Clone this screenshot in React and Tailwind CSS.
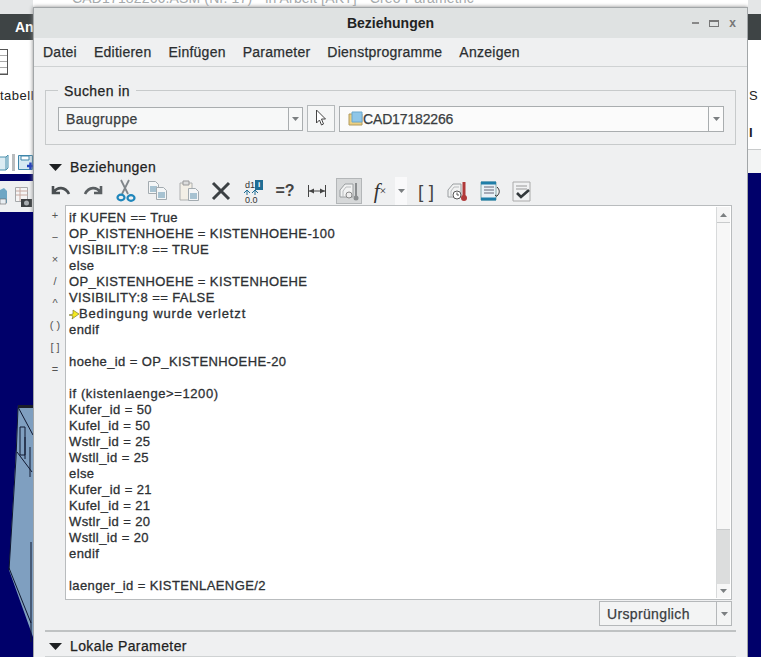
import React from 'react';

const lines = [
  'if KUFEN == True',
  'OP_KISTENHOEHE = KISTENHOEHE-100',
  'VISIBILITY:8 == TRUE',
  'else',
  'OP_KISTENHOEHE = KISTENHOEHE',
  'VISIBILITY:8 == FALSE',
  '#Bedingung wurde verletzt',
  'endif',
  '',
  'hoehe_id = OP_KISTENHOEHE-20',
  '',
  '~if (kistenlaenge>=1200)',
  'Kufer_id = 50',
  'Kufel_id = 50',
  'Wstlr_id = 25',
  'Wstll_id = 25',
  'else',
  'Kufer_id = 21',
  'Kufel_id = 21',
  'Wstlr_id = 20',
  'Wstll_id = 20',
  'endif',
  '',
  'laenger_id = KISTENLAENGE/2',
];

const Caret = ({ className = '' }) => (
  <svg width="7" height="4" viewBox="0 0 7 4" className={className}>
    <path d="M0 0h7L3.5 4z" fill="#7b7f81" />
  </svg>
);

const Section = () => (
  <svg width="13" height="7" viewBox="0 0 13 7" className="shrink-0">
    <path d="M0 0h13L6.5 7z" fill="#1d2022" />
  </svg>
);

const Tool = ({ children, className = '' }) => (
  <div className={`flex h-[26px] w-[26px] shrink-0 items-center justify-center ${className}`}>
    <svg width="24" height="24" viewBox="0 0 24 24" fill="none">{children}</svg>
  </div>
);

const Doc = ({ x = 0, y = 0 }) => (
  <g transform={`translate(${x} ${y})`}>
    <path d="M.5.5h7l3 3v9H.5z" fill="#f4f6f7" stroke="#a3abb0" />
    <path d="M2 6h7M2 8h7M2 10h7" stroke="#5b8fac" />
  </g>
);

const Tag = ({ x = 0 }) => (
  <g transform={`translate(${x} 0)`}>
    <path d="M3 18v-7l5-6h8v13z" fill="#f1f2f2" stroke="#9a9ea0" />
    <path d="M6 18v-6l3-4h5" stroke="#b9bcbe" />
  </g>
);

export default function App() {
  return (
    <div className="relative flex h-[657px] w-[761px] overflow-hidden bg-white text-[14px] leading-none text-[#2d3033] [font-family:'Liberation_Sans',Arial,sans-serif]">
      {/* title of the main window, mostly hidden behind the top edge */}
      <div className="absolute left-[72px] top-[-9px] whitespace-nowrap text-[14px] tracking-[0.15px] text-[#a6aaac]">
        CAD17182266.ASM (Nr. 17) · in Arbeit [AKT] · Creo Parametric
      </div>

      {/* app behind, left side */}
      <div className="flex w-[33px] shrink-0 flex-col">
        <div className="h-[14px] bg-[#e4e6e7]" />
        <div className="flex h-[26px] items-center overflow-hidden bg-[#3e4445] pl-[15px] text-[14px] font-bold text-white">
          <span className="whitespace-nowrap">An</span>
        </div>
        <div className="flex h-[134px] flex-col overflow-hidden bg-white">
          <div className="mt-[9px] h-[26px] w-[8px] border border-l-0 border-[#555] bg-[repeating-linear-gradient(180deg,#fff,#fff_5px,#aaa_5px,#aaa_6px)]" />
          <div className="mt-[14px] whitespace-nowrap text-[13px] tracking-[0.5px] text-[#222]">tabell</div>
          <div className="mt-auto mb-[3px] flex h-[17px] items-center gap-[3px]">
            <svg width="9" height="17" viewBox="0 0 9 17" className="shrink-0">
              <path d="M0 3h6v13H0M6 3l2-2v13l-2 2" fill="#dcecf3" stroke="#4b90ad" />
            </svg>
            <div className="h-[17px] w-[3px] shrink-0 bg-[#b9bcbe]" />
            <svg width="16" height="17" viewBox="0 0 16 17" className="shrink-0">
              <path d="M.5 1.5h14v14H.5z" fill="#d5e8f2" stroke="#3f86aa" />
              <path d="M3 2h8v4H3z" fill="#fff" stroke="#3f86aa" />
              <path d="M9 12h7M12.500 8.500v7" stroke="#1f3fc0" strokeWidth="2.500" />
            </svg>
          </div>
        </div>
        <div className="h-[7px] bg-[#00006a]" />
        <div className="flex h-[31px] items-center gap-[5px] bg-[#eef0f1]">
          <svg width="10" height="22" viewBox="0 0 10 22" className="shrink-0">
            <path d="M0 4l4-2 3 3v12H0z" fill="#6ea6c4" />
            <path d="M0 13h6v5H0z" fill="#e8eef2" stroke="#666" strokeWidth="0.6" />
          </svg>
          <svg width="18" height="22" viewBox="0 0 18 22" className="shrink-0">
            <path d="M.5 1.500h12v14H.5z" fill="#f5f5f5" stroke="#a5a8aa" />
            <path d="M1 5h12M1 9h12M5 1v14" stroke="#c7a9a0" />
            <path d="M6 13h11v8H6z" fill="#3c4042" />
            <circle cx="11.500" cy="17" r="2.500" fill="#a8adb0" />
          </svg>
        </div>
        <div className="relative min-h-0 flex-1 overflow-hidden bg-[#00006a]">
          <svg width="33" height="445" viewBox="0 0 33 445" className="absolute left-0 top-0">
            <path d="M18 193h15v232L9 358l7-120z" fill="#7f9fc0" />
            <path d="M18 193h15v3H18z" fill="#1a1e2a" />
            <path d="M18 195l15 28M20 215h5v28h-5zM25 225v22M17 240l15 20M30 235v30M18 196l-2 50-7 112M9 356l22 55M31 330v100" stroke="#101830" fill="none" />
          </svg>
        </div>
      </div>

      {/* dialog */}
      <div className="mt-[7px] flex w-[715px] shrink-0 flex-col overflow-hidden border-x border-t border-[#a2a6a8] bg-[#eff0f1] shadow-[0_0_4px_#888]">
        <div className="relative flex h-[30px] shrink-0 items-center justify-center bg-[#dfe2e2] text-[14px] font-bold text-[#222]">
          Beziehungen
          <div className="absolute right-[11px] top-[11px] flex items-center gap-[10px]">
            <div className="h-[2px] w-[7px] bg-[#888]" />
            <div className="h-[7px] w-[10px] border border-t-2 border-[#777]" />
            <span className="text-[12px] font-bold leading-[8px] text-[#777]">x</span>
          </div>
        </div>
        <div className="flex h-[29px] shrink-0 items-center gap-[17px] border-b border-[#cfd2d3] pl-[9px] text-[14px] tracking-[0.25px] text-[#2b2e30] [-webkit-text-stroke:0.25px]">
          <span>Datei</span>
          <span>Editieren</span>
          <span>Einfügen</span>
          <span>Parameter</span>
          <span>Dienstprogramme</span>
          <span>Anzeigen</span>
        </div>

        {/* Suchen in */}
        <div className="relative mx-[11px] mt-[23px] flex h-[55px] shrink-0 items-center gap-[4px] border border-[#c7cacb] pl-[12px] pr-[11px]">
          <span className="absolute -top-[7px] left-[12px] bg-[#eff0f1] px-[6px] text-[14px] tracking-[0.4px] text-[#222] [-webkit-text-stroke:0.25px]">Suchen in</span>
          <div className="mt-[2px] flex h-[24px] w-[245px] items-stretch border border-[#a9adaf] bg-[#f7f8f8]">
            <span className="flex flex-1 items-center pl-[7px] tracking-[0.35px] text-[#3a3d40] [-webkit-text-stroke:0.25px]">Baugruppe</span>
            <span className="flex w-[14px] items-center justify-center border-l border-[#a9adaf]"><Caret /></span>
          </div>
          <div className="mt-[1px] flex h-[27px] w-[28px] items-center justify-center border border-[#b5b9bb] bg-[#f5f6f6]">
            <svg width="12" height="18" viewBox="0 0 12 18"><path d="M1.500 1v13l3-3 2 5 2-1-2-5h4z" fill="#fff" stroke="#444" /></svg>
          </div>
          <div className="mt-[2px] flex h-[26px] flex-1 items-stretch border border-[#a9adaf] bg-[#fbfbfb]">
            <span className="flex flex-1 items-center pl-[8px] tracking-[-0.15px] text-[#3a3d40] [-webkit-text-stroke:0.25px]">
              <svg width="15" height="15" viewBox="0 0 15 15" className="shrink-0"><path d="M1 3h13v11H1z" fill="#eccf80" stroke="#b29b5e" /><path d="M4 1h10v10H4z" fill="#8fc6e8" stroke="#6aa7cc" /></svg>
              CAD17182266
            </span>
            <span className="flex w-[15px] items-center justify-center border-l border-[#a9adaf]"><Caret /></span>
          </div>
        </div>

        {/* Beziehungen */}
        <div className="mx-[15px] mt-[13px] flex h-[18px] shrink-0 items-center gap-[8px] text-[14px] tracking-[0.4px] text-[#222] [-webkit-text-stroke:0.25px]">
          <Section />
          Beziehungen
        </div>
        <div className="ml-[14px] mt-[1px] flex h-[28px] shrink-0 items-center gap-[6px]">
          <Tool><path d="M4 7v7h7M5 13c3-5 11-6 15 2" stroke="#4a4f52" strokeWidth="2.600" /></Tool>
          <Tool><path d="M20 7v7h-7M19 13c-3-5-11-6-15 2" stroke="#5a5f62" strokeWidth="2.600" /></Tool>
          <Tool><path d="M8 1l7 14M16 1L9 15" stroke="#80868a" strokeWidth="1.800" /><ellipse cx="8" cy="18.500" rx="3.500" ry="2.800" stroke="#1f86bb" strokeWidth="2.200" /><ellipse cx="18" cy="19" rx="3.500" ry="2.800" stroke="#1f86bb" strokeWidth="2.200" /></Tool>
          <Tool><Doc x="3" y="2" /><Doc x="11" y="8" /></Tool>
          <Tool><path d="M3 4h12v17H3z" fill="#f3efe6" stroke="#aeb0b0" /><path d="M6 2h6v4H6z" fill="#ddd" stroke="#999" /><Doc x="11" y="9" /></Tool>
          <Tool><path d="M4 4l16 16M20 4L4 20" stroke="#3c4144" strokeWidth="3" /></Tool>
          <div className="relative h-[26px] w-[26px] shrink-0 text-[9px] leading-[8px] text-[#333]">
            <span className="absolute left-[5px] top-[3px]">d1</span>
            <span className="absolute right-[3px] top-[2px] flex h-[10px] w-[8px] items-center justify-center bg-[#1f6d94] text-[8px] font-bold text-white">i</span>
            <svg width="14" height="5" viewBox="0 0 14 5" className="absolute left-[4px] top-[12px]">
              <path d="M3 0v5M0 3l3-3 3 3M11 0v5M8 3l3-3 3 3" stroke="#1f6d94" fill="none" />
            </svg>
            <span className="absolute left-[5px] top-[18px]">0.0</span>
          </div>
          <div className="flex h-[26px] w-[26px] shrink-0 items-center justify-center text-[16px] font-bold text-[#444]">=?</div>
          <Tool><path d="M3.500 6v12M20.500 6v12M3 12h18" stroke="#444" /><path d="M4 12l5-2.500v5zM20 12l-5-2.500v5z" fill="#444" /></Tool>
          <Tool className="border border-[#b3b6b8] bg-[#d6d8d9]"><Tag /><path d="M19 4v13" stroke="#8a8d8f" strokeWidth="2" /><circle cx="19" cy="19" r="2.500" fill="#8a8d8f" /><circle cx="12" cy="16" r="3" fill="#eee" stroke="#888" /></Tool>
          <div className="flex h-[26px] w-[24px] shrink-0 items-center justify-center text-[21px] italic text-[#333] [font-family:'Liberation_Serif',serif]">f<span className="text-[12px] not-italic">×</span></div>
          <div className="-ml-[3px] flex h-[28px] w-[12px] shrink-0 items-center justify-center bg-[#f9f9fa]"><Caret /></div>
          <div className="flex h-[26px] w-[26px] shrink-0 items-center justify-center whitespace-pre text-[19px] text-[#444]">[ ]</div>
          <Tool><Tag x="-1" /><circle cx="11" cy="16" r="4" fill="#fff" stroke="#555" /><path d="M11 13.500V16h2" stroke="#555" /><path d="M18 3v14" stroke="#b03a3a" strokeWidth="3" /><circle cx="18" cy="19" r="3" fill="#b03a3a" /></Tool>
          <Tool><path d="M3 3h15v18H3z" fill="#e9f1f6" stroke="#8aa" /><path d="M3 4h15M3 20h15" stroke="#1f7ea8" strokeWidth="3" /><path d="M6 8h10M6 11h10M6 14h10" stroke="#667" /><path d="M19 8c3 3 3 6 0 9M17 16l2 1.500" stroke="#333" /></Tool>
          <Tool><path d="M3 3h17v19H3z" fill="#f1f2f3" stroke="#aaa" /><path d="M6 7h11M6 10h11" stroke="#999" /><path d="M7 14l4 4 8-7" stroke="#33393c" strokeWidth="2.600" /></Tool>
        </div>

        {/* editor */}
        <div className="ml-[11px] mr-[15px] flex shrink-0">
          <div className="-mt-[1px] flex w-[20px] shrink-0 flex-col items-center text-[#555]">
            {['+', '−', '×', '/', '^', '( )', '[ ]', '='].map((s) => (
              <span key={s} className="flex h-[22px] items-center text-[11px]">{s}</span>
            ))}
          </div>
          <div className="flex h-[395px] flex-1 border border-[#b9bcbe] bg-white">
            <div className="flex-1 overflow-hidden pl-[3px] pt-[4px] text-[13px] leading-[16px] tracking-[0.4px] text-[#2d3033] [-webkit-text-stroke:0.3px]">
              {lines.map((l, i) => (
                <div key={i} className="h-[16px] whitespace-pre">
                  {l.startsWith('#') && (
                    <span className="flex items-center tracking-[0.85px]">
                      <svg width="10" height="12" viewBox="0 0 10 12"><path d="M0 7l4-1V2l6 4-7 5 1-3z" fill="#f4ea20" stroke="#6d6a28" strokeWidth="0.6" /></svg>
                      {l.slice(1)}
                    </span>
                  )}
                  {l.startsWith('~') && <span className="tracking-[0.6px]">{l.slice(1)}</span>}
                  {!l.startsWith('#') && !l.startsWith('~') && l}
                </div>
              ))}
            </div>
            <div className="my-px mr-px flex w-[14px] shrink-0 flex-col border-l border-[#d8dadb] bg-[#f5f5f5]">
              <div className="flex h-[15px] items-center justify-center"><Caret className="rotate-180" /></div>
              <div className="h-[308px] border-y border-[#c9cbcc] bg-[#f7f7f7]" />
              <div className="flex-1 bg-[#dcdddd]" />
              <div className="flex h-[14px] items-center justify-center bg-[#f7f7f7]"><Caret /></div>
            </div>
          </div>
        </div>

        {/* footer */}
        <div className="mr-[15px] mt-[1px] flex shrink-0 justify-end">
          <div className="flex h-[25px] w-[133px] items-stretch border border-[#b5b8ba] bg-[#f3f4f4]">
            <span className="flex flex-1 items-center pl-[7px] tracking-[0.35px] text-[#3a3d40] [-webkit-text-stroke:0.25px]">Ursprünglich</span>
            <span className="flex w-[15px] items-center justify-center border-l border-[#b5b8ba]"><Caret /></span>
          </div>
        </div>
        <div className="mx-[11px] mt-[4px] h-[2px] shrink-0 bg-[#bfc2c3]" />
        <div className="mx-[15px] mt-[6px] flex h-[16px] shrink-0 items-center gap-[8px] text-[14px] tracking-[0.4px] text-[#222] [-webkit-text-stroke:0.25px]">
          <Section />
          Lokale Parameter
        </div>
        <div className="mx-[11px] mt-[2px] h-px shrink-0 bg-[#cfd2d3]" />
      </div>

      {/* app behind, right side */}
      <div className="flex min-w-0 flex-1 flex-col overflow-hidden">
        <div className="h-[14px] bg-[#e4e6e7]" />
        <div className="h-[26px] bg-[#3e4445]" />
        <div className="flex h-[109px] flex-col bg-white pl-[1px] pt-[49px] text-[13px] text-[#222]">
          <span>S</span>
          <span className="mt-[24px] font-bold">I</span>
        </div>
        <div className="h-[24px] border-t border-[#c8cacb] bg-[#f2f3f3]" />
        <div className="flex-1 bg-[#00006a]" />
      </div>
    </div>
  );
}
